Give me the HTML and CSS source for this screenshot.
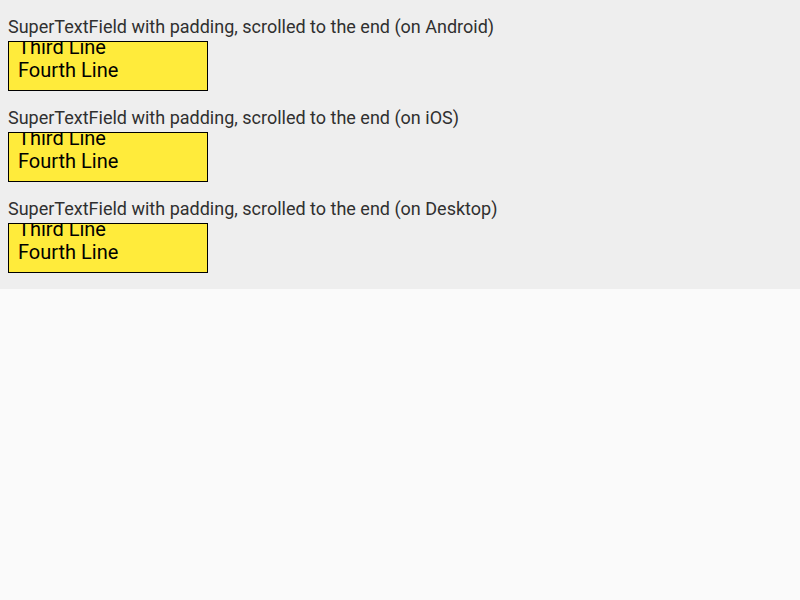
FILE: index.html
```html
<!DOCTYPE html>
<html>
<head>
<meta charset="utf-8">
<link rel="stylesheet" href="styles.css">
</head>
<body>
<div class="panel">
  <div class="section">
    <div class="label">SuperTextField with padding, scrolled to the end (on Android)</div>
    <div class="field"><div class="content"><div class="line">Third Line</div><div class="line">Fourth Line</div></div></div>
  </div>
  <div class="section">
    <div class="label">SuperTextField with padding, scrolled to the end (on iOS)</div>
    <div class="field"><div class="content"><div class="line">Third Line</div><div class="line">Fourth Line</div></div></div>
  </div>
  <div class="section">
    <div class="label">SuperTextField with padding, scrolled to the end (on Desktop)</div>
    <div class="field"><div class="content"><div class="line">Third Line</div><div class="line">Fourth Line</div></div></div>
  </div>
</div>
</body>
</html>
```
FILE: styles.css
```css
html, body {
  margin: 0;
  padding: 0;
  background: #fafafa;
  font-family: Roboto, "Liberation Sans", sans-serif;
}
.panel {
  background: #eeeeee;
  padding: 16px 8px;
  display: flex;
  flex-direction: column;
  gap: 16px;
}
.section {
  display: flex;
  flex-direction: column;
  gap: 4px;
}
.label {
  font-size: 18px;
  line-height: 21px;
  height: 21px;
  color: #303030;
  white-space: nowrap;
}
.field {
  width: 200px;
  height: 50px;
  box-sizing: border-box;
  border: 1px solid #000000;
  background: #ffeb3b;
  overflow: hidden;
  display: flex;
  flex-direction: column;
  justify-content: flex-end;
}
.content {
  padding: 8px 9px;
  flex-shrink: 0;
}
.line {
  font-size: 20px;
  line-height: 23px;
  color: #000000;
  white-space: nowrap;
}
```
